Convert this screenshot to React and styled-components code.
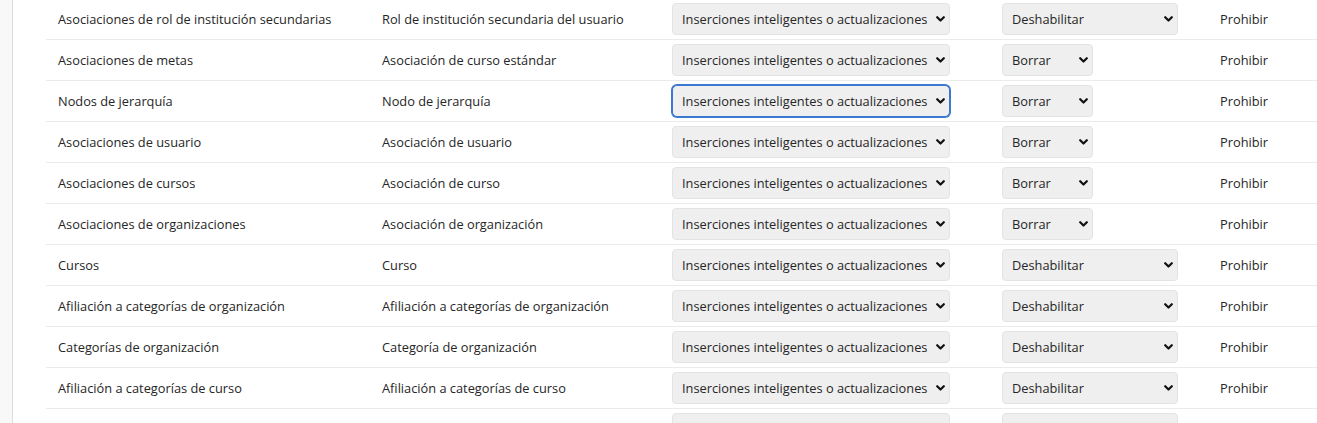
import React from 'react';
import styled, { createGlobalStyle } from 'styled-components';

const GlobalStyle = createGlobalStyle`
    html, body {
        margin: 0;
        padding: 0;
        background: #ffffff;
        font-family: "Open Sans", "Noto Sans", sans-serif;
        color: #262626;
        overflow: hidden;
    }
`;

const Page = styled.div`
    display: flex;
    min-height: 423px;
`;

const Sidebar = styled.div`
    width: 12px;
    flex-shrink: 0;
    background-color: #f8f8f8;
    border-right: 1px solid #dcdcdc;
`;

const Main = styled.div`
    flex: 1;
    padding-left: 33px;
    margin-top: -1px;
`;

const Row = styled.div`
    display: grid;
    grid-template-columns: 324px 290px 330px 218px 1fr;
    align-items: center;
    height: 40px;
    border-bottom: 1px solid #ebebeb;
    font-size: 12.8px;
`;

const Cell = styled.div`
    padding-left: 12px;
    white-space: nowrap;
`;

const SelectWrap = styled.div`
    position: relative;
    display: inline-block;
    width: ${props => props.width}px;
    vertical-align: middle;
`;

const Select = styled.select`
    appearance: none;
    -webkit-appearance: none;
    display: block;
    width: 100%;
    height: 32px;
    box-sizing: border-box;
    padding: 0 18px 0 9px;
    border: 1px solid #e3e3e3;
    border-radius: 4px;
    background-color: #efefef;
    font-family: "Open Sans", "Noto Sans", sans-serif;
    font-size: 12.8px;
    color: #262626;
    outline: none;
    box-shadow: ${props => props.focused ? '0 0 0 1px #3b78d2' : 'none'};
    ${props => props.focused && 'border-color: #3b78d2; border-radius: 5px;'}
`;

const Chevron = styled.svg`
    position: absolute;
    right: 5px;
    top: 13px;
    width: 9px;
    height: 6px;
    pointer-events: none;
`;

function Dropdown({ value, options, width, focused }) {
    return (
        <SelectWrap width={width}>
            <Select defaultValue={value} focused={focused}>
                {options.map(o => <option key={o}>{o}</option>)}
            </Select>
            <Chevron viewBox="0 0 9 6">
                <path d="M1.2 1.2 L4.5 4.5 L7.8 1.2" fill="none" stroke="#111" strokeWidth="2.2" strokeLinecap="round" strokeLinejoin="round" />
            </Chevron>
        </SelectWrap>
    );
}

const modeOptions = ['Inserciones inteligentes o actualizaciones', 'Solo inserciones', 'Solo actualizaciones'];
const removeOptions = ['Deshabilitar', 'Borrar', 'Ignorar'];

const rows = [
    ['Asociaciones de rol de institución secundarias', 'Rol de institución secundaria del usuario', 'Deshabilitar'],
    ['Asociaciones de metas', 'Asociación de curso estándar', 'Borrar'],
    ['Nodos de jerarquía', 'Nodo de jerarquía', 'Borrar', true],
    ['Asociaciones de usuario', 'Asociación de usuario', 'Borrar'],
    ['Asociaciones de cursos', 'Asociación de curso', 'Borrar'],
    ['Asociaciones de organizaciones', 'Asociación de organización', 'Borrar'],
    ['Cursos', 'Curso', 'Deshabilitar'],
    ['Afiliación a categorías de organización', 'Afiliación a categorías de organización', 'Deshabilitar'],
    ['Categorías de organización', 'Categoría de organización', 'Deshabilitar'],
    ['Afiliación a categorías de curso', 'Afiliación a categorías de curso', 'Deshabilitar'],
    ['', '', 'Deshabilitar'],
];

export default function App() {
    return (
        <>
            <GlobalStyle />
            <Page>
                <Sidebar />
                <Main>
                    {rows.map(([name, type, removal, focused], i) => (
                        <Row key={i}>
                            <Cell>{name}</Cell>
                            <Cell>{type}</Cell>
                            <Cell>
                                <Dropdown value={modeOptions[0]} options={modeOptions} width={278} focused={focused} />
                            </Cell>
                            <Cell>
                                <Dropdown value={removal} options={removeOptions} width={removal === 'Borrar' ? 91 : 176} />
                            </Cell>
                            <Cell>{name ? 'Prohibir' : ''}</Cell>
                        </Row>
                    ))}
                </Main>
            </Page>
        </>
    );
}
